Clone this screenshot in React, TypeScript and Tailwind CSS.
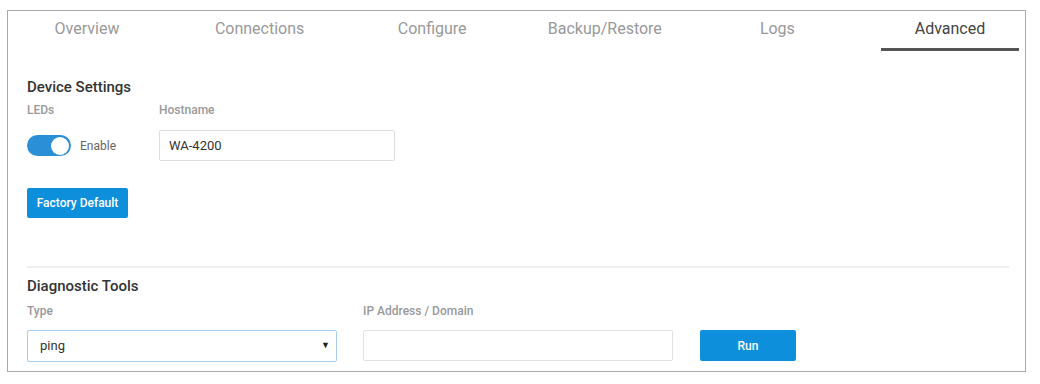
const tabs = ['Overview', 'Connections', 'Configure', 'Backup/Restore', 'Logs', 'Advanced'];

export default function App() {
  return (
    <div className="h-[384px] w-[1040px] bg-white pl-[7px] pt-[10px] font-['Roboto',sans-serif]">
      <div className="h-[362px] w-[1019px] border border-[#aaaaaa] bg-white">
        <div className="flex justify-between pl-[10px] pr-[6px]">
          {tabs.map((t) => (
            <div
              key={t}
              className={
                t === 'Advanced'
                  ? 'flex h-[40px] w-[138px] items-center justify-center border-b-[3px] border-[#555555] pb-[2px] text-[16px] text-[#444444]'
                  : 'flex h-[40px] w-[138px] items-center justify-center border-b-[3px] border-transparent pb-[2px] text-[16px] text-[#999999]'
              }
            >
              {t}
            </div>
          ))}
        </div>

        <div className="px-[19px] pr-[16px]">
          <h2 className="mt-[27px] text-[15px] font-medium leading-[18px] text-[#333333]">Device Settings</h2>
          <div className="mt-[7px] flex">
            <div className="w-[132px]">
              <div className="text-[12px] font-medium leading-[14px] text-[#999999]">LEDs</div>
              <div className="mt-[18px] flex items-center">
                <div className="flex h-[21px] w-[44px] items-center justify-end rounded-full bg-[#2b8fd8] pr-[2px]">
                  <div className="h-[18px] w-[18px] rounded-full bg-white" />
                </div>
                <span className="ml-[9px] text-[12px] text-[#666666]">Enable</span>
              </div>
            </div>
            <div>
              <div className="text-[12px] font-medium leading-[14px] text-[#999999]">Hostname</div>
              <div className="mt-[13px] flex h-[31px] w-[236px] items-center rounded-[2px] border border-[#dddddd] px-[9px] text-[13px] text-[#333333]">
                WA-4200
              </div>
            </div>
          </div>
          <button className="mt-[27px] h-[30px] w-[101px] rounded-[2px] bg-[#0e8fdc] text-[12px] font-medium text-white">
            Factory Default
          </button>

          <div className="mt-[48px] h-[2px] w-[982px] bg-[#eeeeee]" />

          <h2 className="mt-[9px] text-[15px] font-medium leading-[18px] text-[#333333]">Diagnostic Tools</h2>
          <div className="mt-[9px] flex items-end">
            <div className="w-[336px]">
              <div className="text-[12px] font-medium leading-[14px] text-[#999999]">Type</div>
              <div className="mt-[12px] flex h-[32px] w-[310px] items-center justify-between rounded-[2px] border border-[#a6cdee] pl-[12px] pr-[6px] text-[13px] text-[#333333]">
                <span>ping</span>
                <span className="text-[9px] text-[#222222]">▼</span>
              </div>
            </div>
            <div className="w-[337px]">
              <div className="text-[12px] font-medium leading-[14px] text-[#999999]">IP Address / Domain</div>
              <div className="mt-[12px] mb-[1px] h-[31px] w-[310px] rounded-[2px] border border-[#e2e2e2]" />
            </div>
            <button className="mb-[1px] h-[31px] w-[96px] rounded-[2px] bg-[#0e8fdc] text-[12px] font-medium text-white">
              Run
            </button>
          </div>
        </div>
      </div>
    </div>
  );
}
